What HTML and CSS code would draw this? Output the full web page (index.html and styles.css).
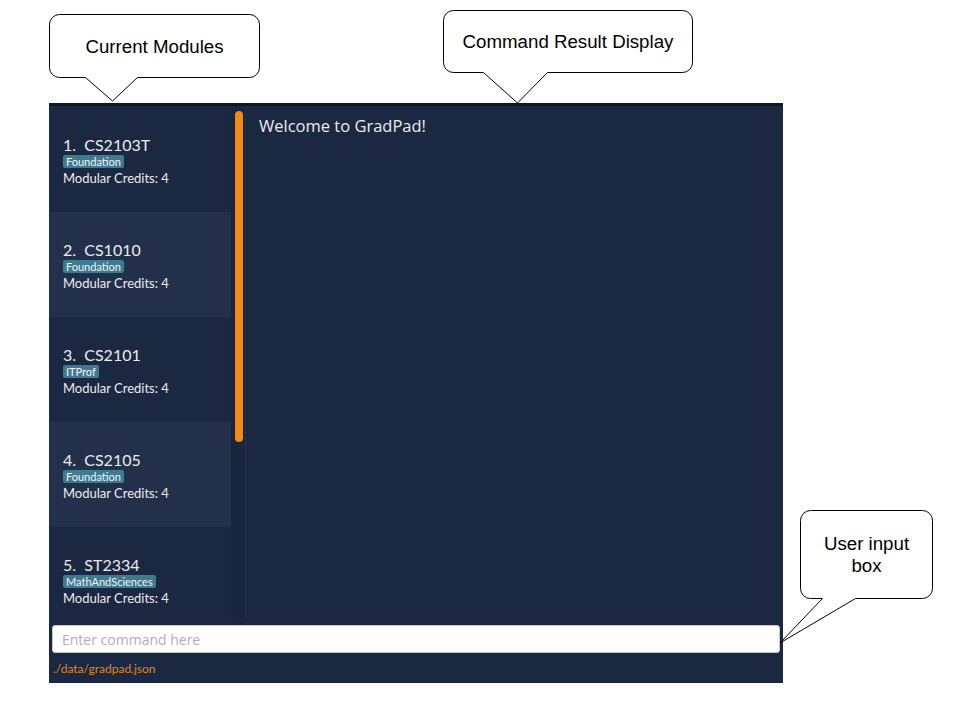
FILE: index.html
```html
<!DOCTYPE html>
<html lang="en">
<head>
    <meta charset="UTF-8">
    <meta name="viewport" content="width=device-width, initial-scale=1.0">
    <title>GradPad</title>
    <link rel="stylesheet" href="styles.css">
</head>
<body>
    <div class="stage">
        <div class="app">
            <div class="main">
                <div class="module-list">
                    <div class="module">
                        <div class="module-title">1.&nbsp; CS2103T</div>
                        <span class="tag">Foundation</span>
                        <div class="credits">Modular Credits: 4</div>
                    </div>
                    <div class="module alt">
                        <div class="module-title">2.&nbsp; CS1010</div>
                        <span class="tag">Foundation</span>
                        <div class="credits">Modular Credits: 4</div>
                    </div>
                    <div class="module">
                        <div class="module-title">3.&nbsp; CS2101</div>
                        <span class="tag">ITProf</span>
                        <div class="credits">Modular Credits: 4</div>
                    </div>
                    <div class="module alt">
                        <div class="module-title">4.&nbsp; CS2105</div>
                        <span class="tag">Foundation</span>
                        <div class="credits">Modular Credits: 4</div>
                    </div>
                    <div class="module">
                        <div class="module-title">5.&nbsp; ST2334</div>
                        <span class="tag">MathAndSciences</span>
                        <div class="credits">Modular Credits: 4</div>
                    </div>
                </div>
                <div class="scroll-track">
                    <div class="scroll-thumb"></div>
                </div>
                <div class="result">Welcome to GradPad!</div>
            </div>
            <div class="command-box">
                <input class="command-input" type="text" placeholder="Enter command here">
            </div>
            <div class="status">./data/gradpad.json</div>
        </div>

        <!-- annotation callouts -->
        <div class="callout callout-modules">
            <svg width="214" height="90" viewBox="0 0 214 90">
                <path d="M 11.5 1.5 H 201.5 A 10 10 0 0 1 211.5 11.5 V 54.5 A 10 10 0 0 1 201.5 64.5 H 89.5 L 64.5 88 L 37.5 64.5 H 11.5 A 10 10 0 0 1 1.5 54.5 V 11.5 A 10 10 0 0 1 11.5 1.5 Z"/>
            </svg>
            <span class="callout-label label-modules">Current Modules</span>
        </div>
        <div class="callout callout-result">
            <svg width="253" height="96" viewBox="0 0 253 96">
                <path d="M 11.5 1.5 H 240.5 A 10 10 0 0 1 250.5 11.5 V 53.5 A 10 10 0 0 1 240.5 63.5 H 105.5 L 75.5 94 L 41.5 63.5 H 11.5 A 10 10 0 0 1 1.5 53.5 V 11.5 A 10 10 0 0 1 11.5 1.5 Z"/>
            </svg>
            <span class="callout-label label-result">Command Result Display</span>
        </div>
        <div class="callout callout-input">
            <svg width="157" height="137" viewBox="0 0 157 137">
                <path d="M 32.5 1.5 H 144.5 A 10 10 0 0 1 154.5 11.5 V 79.5 A 10 10 0 0 1 144.5 89.5 H 77.5 L 2 134 L 44.5 89.5 H 32.5 A 10 10 0 0 1 22.5 79.5 V 11.5 A 10 10 0 0 1 32.5 1.5 Z"/>
            </svg>
            <span class="callout-label label-input">User input<br>box</span>
        </div>
    </div>
</body>
</html>
```

FILE: styles.css
```css
body {
    margin: 0;
    background: #fff;
    font-family: Lato, "Open Sans", sans-serif;
}

.stage {
    position: relative;
    width: 960px;
    height: 720px;
    padding: 103px 0 0 49px;
    box-sizing: border-box;
}

.app {
    width: 734px;
    height: 580px;
    background: #1b2842;
    border-top: 3px solid #11161f;
    box-sizing: border-box;
    display: flex;
    flex-direction: column;
}

.main {
    display: flex;
    height: 512px;
    overflow: hidden;
}

.module-list {
    width: 182px;
    padding-top: 1px;
    flex-shrink: 0;
}

.module {
    height: 105px;
    padding-left: 14px;
    display: flex;
    flex-direction: column;
    justify-content: center;
    align-items: flex-start;
    color: #ececec;
}

.module.alt {
    background: #22304c;
}

.module-title {
    font-size: 16px;
    line-height: 20px;
    padding-top: 1px;
}

.tag {
    background: #3e7b91;
    color: #f2f2f2;
    font-size: 11px;
    line-height: 13px;
    padding: 0 3px;
    border-radius: 2px;
    margin: 0 0 2px;
}

.credits {
    font-size: 13px;
    line-height: 16px;
}

.scroll-track {
    width: 15px;
    flex-shrink: 0;
    padding: 5px 0 0 4px;
    box-sizing: border-box;
    border-right: 1px solid #24324d;
    background: #1a263e;
}

.scroll-thumb {
    width: 8px;
    height: 331px;
    background: #f28a1a;
    border-radius: 4px;
}

.result {
    flex: 1;
    padding: 8px 13px;
    color: #ececec;
    font-family: "Open Sans", sans-serif;
    font-size: 16.5px;
}

.command-box {
    padding: 7px 3px 0 3px;
}

.command-input {
    display: block;
    width: 100%;
    height: 28px;
    box-sizing: border-box;
    border: 1px solid #c8c8c8;
    border-radius: 3px;
    padding: 0 9px;
    background: #fff;
    font-family: "Open Sans", sans-serif;
    font-size: 14px;
}

.command-input::placeholder {
    color: #b0b0b0;
}

.status {
    padding: 8px 4px 0;
    color: #e0861b;
    font-size: 12px;
}

.callout {
    position: absolute;
}

.callout svg {
    display: block;
}

.callout path {
    fill: #fff;
    stroke: #000;
    stroke-width: 1;
}

.callout-label {
    position: absolute;
    display: flex;
    align-items: center;
    justify-content: center;
    text-align: center;
    font-family: "Liberation Sans", Arial, sans-serif;
    font-size: 18.7px;
    line-height: 22px;
    color: #000;
}

.callout-modules {
    left: 48px;
    top: 13px;
}

.label-modules {
    left: 1px;
    top: 2px;
    width: 211px;
    height: 64px;
}

.callout-result {
    left: 442px;
    top: 9px;
}

.label-result {
    left: 1px;
    top: 1px;
    width: 250px;
    height: 63px;
}

.callout-input {
    left: 778px;
    top: 509px;
}

.label-input {
    left: 22px;
    top: 1px;
    width: 133px;
    height: 89px;
}
```
